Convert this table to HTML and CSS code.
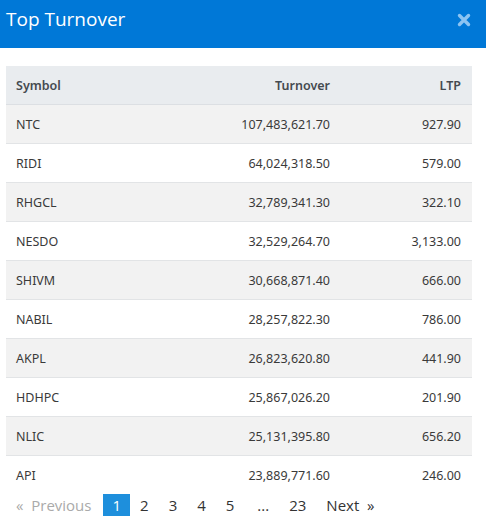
FILE: index.html
```html
<!DOCTYPE html>
<html>
<head>
<meta charset="utf-8">
<link rel="stylesheet" href="styles.css">
</head>
<body>
<div class="modal">
  <div class="modal-header">
    <h2 class="title">Top Turnover</h2>
    <svg class="close" width="14" height="14" viewBox="0 0 14 14"><path d="M2.5 2.5 L11.5 11.5 M11.5 2.5 L2.5 11.5" stroke="#8cc4f2" stroke-width="3.4" stroke-linecap="round"/></svg>
  </div>
  <div class="modal-body">
    <table class="grid">
      <thead>
        <tr><th class="sym">Symbol</th><th class="num">Turnover</th><th class="num ltp">LTP</th></tr>
      </thead>
      <tbody>
        <tr><td class="sym">NTC</td><td class="num">107,483,621.70</td><td class="num ltp">927.90</td></tr>
        <tr><td class="sym">RIDI</td><td class="num">64,024,318.50</td><td class="num ltp">579.00</td></tr>
        <tr><td class="sym">RHGCL</td><td class="num">32,789,341.30</td><td class="num ltp">322.10</td></tr>
        <tr><td class="sym">NESDO</td><td class="num">32,529,264.70</td><td class="num ltp">3,133.00</td></tr>
        <tr><td class="sym">SHIVM</td><td class="num">30,668,871.40</td><td class="num ltp">666.00</td></tr>
        <tr><td class="sym">NABIL</td><td class="num">28,257,822.30</td><td class="num ltp">786.00</td></tr>
        <tr><td class="sym">AKPL</td><td class="num">26,823,620.80</td><td class="num ltp">441.90</td></tr>
        <tr><td class="sym">HDHPC</td><td class="num">25,867,026.20</td><td class="num ltp">201.90</td></tr>
        <tr><td class="sym">NLIC</td><td class="num">25,131,395.80</td><td class="num ltp">656.20</td></tr>
        <tr class="last"><td class="sym">API</td><td class="num">23,889,771.60</td><td class="num ltp">246.00</td></tr>
      </tbody>
    </table>
    <div class="pager">
      <span class="pg disabled">&laquo;&nbsp;&nbsp;Previous</span>
      <span class="pg active">1</span>
      <span class="pg">2</span>
      <span class="pg">3</span>
      <span class="pg">4</span>
      <span class="pg">5</span>
      <span class="pg ellipsis">...</span>
      <span class="pg">23</span>
      <span class="pg">Next&nbsp;&nbsp;&raquo;</span>
    </div>
  </div>
</div>
</body>
</html>
```
FILE: styles.css
```css
html, body {
  margin: 0;
  padding: 0;
  background: #fff;
}
.modal {
  width: 486px;
  font-family: "Open Sans", sans-serif;
}
.modal-header {
  background: #0078d7;
  height: 48px;
  display: flex;
  align-items: flex-start;
  justify-content: space-between;
  padding: 0 15px 0 6px;
  box-sizing: border-box;
}
.title {
  margin: 6px 0 0 0;
  font-size: 19px;
  font-weight: 400;
  color: #fff;
  line-height: 26px;
}
.close {
  margin-top: 13px;
}
.modal-body {
  padding: 18px 14px 0 6px;
}
.grid {
  width: 466px;
  border-collapse: collapse;
  font-family: "Noto Sans", sans-serif;
  font-size: 12.5px;
  color: #3a3a3a;
}
.grid th {
  background: #e9ecef;
  font-weight: 600;
  color: #454a50;
  height: 38px;
  padding: 0;
  border-bottom: 1px solid #dcdfe3;
}
.grid td {
  height: 38px;
  padding: 0;
  border-bottom: 1px solid #e2e4e6;
}
.grid tr.last td {
  border-bottom: none;
}
.grid tbody tr:nth-child(odd) td {
  background: #f2f2f2;
}
.grid .sym {
  text-align: left;
  padding-left: 10px;
}
.grid .num {
  text-align: right;
}
.grid .ltp {
  width: 131px;
  padding-right: 11px;
}
.pager {
  display: flex;
  align-items: center;
  font-size: 15px;
  color: #333;
}
.pg {
  padding: 0 10px;
  line-height: 22px;
}
.pg.disabled {
  color: #aaa;
  padding-right: 12px;
}
.pg.active {
  background: #1e8fdc;
  color: #fff;
  padding: 0 9px;
}
.pg.ellipsis {
  margin-left: 3px;
}
```
